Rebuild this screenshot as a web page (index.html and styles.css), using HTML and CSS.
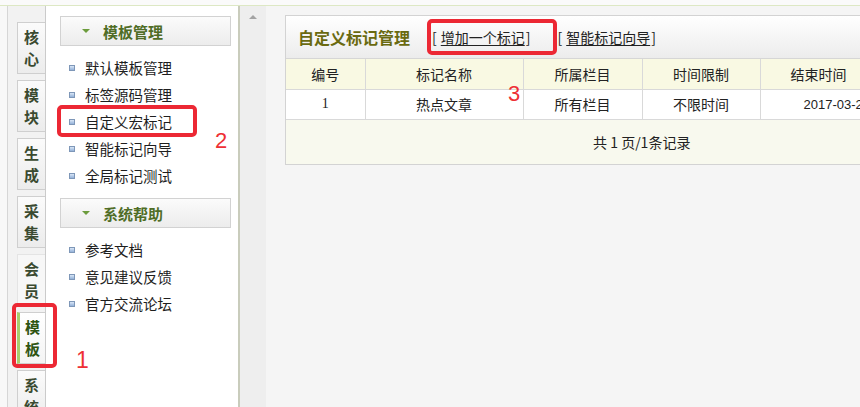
FILE: index.html
```html
<!DOCTYPE html>
<html lang="zh">
<head>
<meta charset="utf-8">
<title>自定义标记管理</title>
<link rel="stylesheet" href="styles.css">
</head>
<body>
<div class="topbar"></div>
<div class="app">
  <div class="edge"></div>
  <nav class="tabs">
    <div class="tab">核<br>心</div>
    <div class="tab">模<br>块</div>
    <div class="tab">生<br>成</div>
    <div class="tab">采<br>集</div>
    <div class="tab tab-plain">会<br>员</div>
    <div class="tab tab-active">模<br>板</div>
    <div class="tab">系<br>统</div>
  </nav>
  <aside class="menu">
    <div class="menu-head"><span class="caret"></span>模板管理</div>
    <ul class="menu-list">
      <li><span class="dot"></span>默认模板管理</li>
      <li><span class="dot"></span>标签源码管理</li>
      <li><span class="dot"></span>自定义宏标记</li>
      <li><span class="dot"></span>智能标记向导</li>
      <li><span class="dot"></span>全局标记测试</li>
    </ul>
    <div class="menu-head"><span class="caret"></span>系统帮助</div>
    <ul class="menu-list">
      <li><span class="dot"></span>参考文档</li>
      <li><span class="dot"></span>意见建议反馈</li>
      <li><span class="dot"></span>官方交流论坛</li>
    </ul>
  </aside>
  <div class="scrollcol"><span class="arrow-up"></span></div>
  <main class="main">
    <div class="panel">
      <div class="panel-head">
        <span class="title">自定义标记管理</span>
        <span class="link link-add"><span class="bl">[</span><u>增加一个标记</u><span class="br">]</span></span>
        <span class="link"><span class="bl">[</span><u>智能标记向导</u><span class="br">]</span></span>
      </div>
      <table class="grid">
        <colgroup>
          <col class="c1"><col class="c2"><col class="c3"><col class="c4"><col class="c5">
        </colgroup>
        <thead>
          <tr><th>编号</th><th>标记名称</th><th>所属栏目</th><th>时间限制</th><th class="end-h">结束时间</th></tr>
        </thead>
        <tbody>
          <tr><td class="num">1</td><td>热点文章</td><td>所有栏目</td><td>不限时间</td><td class="end-d">2017-03-24</td></tr>
        </tbody>
        <tfoot>
          <tr><td colspan="5">共 1 页/1条记录</td></tr>
        </tfoot>
      </table>
    </div>
  </main>
</div>
<div class="mark mark-1"></div>
<div class="mark mark-2"></div>
<div class="mark mark-3"></div>
<span class="num-label label-1">1</span>
<span class="num-label label-2">2</span>
<span class="num-label label-3">3</span>
</body>
</html>
```
FILE: styles.css
```css
* { box-sizing: border-box; }
html, body {
  margin: 0;
  padding: 0;
  width: 860px;
  height: 407px;
  overflow: hidden;
  background: #f5f5f5;
  font-family: "Noto Sans CJK SC", "Liberation Sans", sans-serif;
  font-size: 14px;
  color: #222;
}
.topbar {
  height: 6px;
  background: #fafafa;
  border-bottom: 1px solid #dde8c4;
}
.app {
  display: flex;
  height: 401px;
}
.edge {
  width: 8px;
  background: #f8f8f8;
  border-right: 1px solid #d6d6d6;
}
.tabs {
  width: 38px;
  background: #f2f2f2;
  border-right: 1px solid #cbcbcb;
  padding: 16px 0 0 9px;
  display: flex;
  flex-direction: column;
  gap: 6px;
  overflow: hidden;
}
.tab {
  flex: none;
  width: 28px;
  height: 52px;
  border: 1px solid #cfcfcf;
  border-right: none;
  background: linear-gradient(#fbfbfb, #ececec);
  display: flex;
  align-items: center;
  justify-content: center;
  text-align: center;
  font-weight: bold;
  font-size: 15px;
  line-height: 22px;
  color: #3a4a30;
}
.tab-plain {
  border-color: #e4e4e4;
  background: #f7f7f7;
}
.tab-active {
  border-left: 3px solid #a8cd6c;
  background: linear-gradient(#ffffff, #f4f4f4);
  color: #2e5412;
}
.menu {
  width: 194px;
  background: #fff;
  border-right: 2px solid #c9ccbc;
  padding: 10px 0 0 14px;
}
.menu-head {
  width: 171px;
  height: 30px;
  border: 1px solid #d2d2d2;
  background: linear-gradient(#fbfbfb, #ececec);
  display: flex;
  align-items: center;
  padding-left: 21px;
  font-weight: bold;
  font-size: 15px;
  color: #4f6d26;
}
.caret {
  width: 0;
  height: 0;
  border-left: 4px solid transparent;
  border-right: 4px solid transparent;
  border-top: 4px solid #6c9c3c;
  margin-right: 13px;
}
.menu-list {
  list-style: none;
  margin: 8px 0 9px 0;
  padding: 0 0 0 9px;
}
.menu-list li {
  height: 27px;
  display: flex;
  align-items: center;
  font-size: 14.5px;
  color: #1e1e1e;
}
.dot {
  width: 6px;
  height: 6px;
  border: 1px solid #7e97b8;
  background: linear-gradient(#d9e6f6, #93b1d8);
  margin-right: 10px;
  flex: none;
}
.scrollcol {
  width: 26px;
  background: #eeeeee;
  display: flex;
  justify-content: center;
  padding-top: 9px;
}
.arrow-up {
  width: 0;
  height: 0;
  border-left: 4px solid transparent;
  border-right: 4px solid transparent;
  border-bottom: 4px solid #a3a3a3;
}
.main {
  flex: 1;
  min-width: 0;
  background: #f5f5f5;
  padding: 9px 0 0 19px;
  overflow: hidden;
}
.panel {
  width: 712px;
  border: 1px solid #d3d3d3;
  background: #fff;
}
.panel-head {
  height: 43px;
  display: flex;
  align-items: center;
  padding-left: 12px;
  background: linear-gradient(#ffffff, #ececec);
  border-bottom: 1px solid #d6d6d6;
  white-space: nowrap;
}
.title {
  font-weight: bold;
  font-size: 16px;
  color: #6a6a10;
  margin-right: 22px;
}
.link {
  font-size: 14px;
  color: #222;
  display: flex;
  align-items: center;
}
.link .bl { margin-right: 4px; }
.link .br { margin-left: 1px; }
.link u { text-underline-offset: 2px; }
.link-add { margin-right: 27px; }
.grid {
  width: 100%;
  border-collapse: collapse;
  table-layout: fixed;
}
.c1 { width: 79px; }
.c2 { width: 158px; }
.c3 { width: 119px; }
.c4 { width: 118px; }
.c5 { width: 238px; }
.grid th, .grid td {
  height: 30px;
  border: 1px solid #d9d9d9;
  text-align: center;
  font-weight: normal;
  font-size: 14px;
  padding: 0;
  white-space: nowrap;
}
.grid tr > :first-child { border-left: none; }
.grid thead th {
  background: #f9f9e3;
  border-top: none;
}
.grid tbody td { background: #fff; }
.grid .num { font-family: "Liberation Serif", serif; }
.grid .end-h { text-align: left; padding-left: 30px; }
.grid .end-d { text-align: left; padding-left: 43px; font-family: "Liberation Sans", sans-serif; font-size: 13px; }
.grid tfoot td {
  height: 45px;
  background: #f8f9ee;
  border-bottom: none;
}
.mark {
  position: absolute;
  border: 4px solid #ec2834;
  border-radius: 5px;
}
.mark-1 { left: 12px; top: 303px; width: 45px; height: 65px; }
.mark-2 { left: 57px; top: 105px; width: 140px; height: 32px; }
.mark-3 { left: 427px; top: 19px; width: 130px; height: 36px; }
.num-label {
  position: absolute;
  font-family: "Liberation Sans", sans-serif;
  color: #ee2f35;
  font-size: 22px;
  line-height: 1;
}
.label-1 { left: 76px; top: 349px; font-size: 23px; }
.label-2 { left: 215px; top: 130px; }
.label-3 { left: 508px; top: 83px; }
```
